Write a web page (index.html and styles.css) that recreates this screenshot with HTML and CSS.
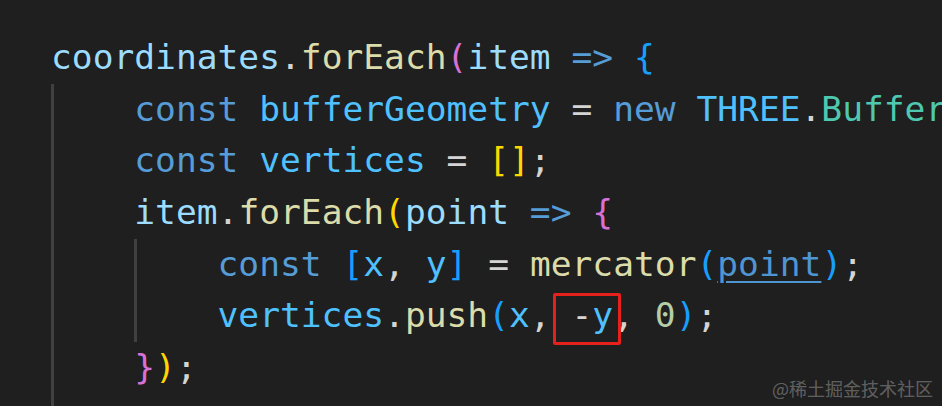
FILE: index.html
```html
<!DOCTYPE html>
<html lang="zh">
<head>
<meta charset="utf-8">
<link rel="stylesheet" href="styles.css">
</head>
<body>
<div class="editor">
<div class="line"><span class="var">coordinates</span><span class="pun">.</span><span class="fn">forEach</span><span class="b2">(</span><span class="var">item</span> <span class="kw">=&gt;</span> <span class="b3">{</span></div>
<div class="block">
<div class="line"><span class="kw">const</span> <span class="cst">bufferGeometry</span> <span class="pun">=</span> <span class="kw">new</span> <span class="cst">THREE</span><span class="pun">.</span><span class="cls">BufferGeometry</span><span class="b1">()</span><span class="pun">;</span></div>
<div class="line"><span class="kw">const</span> <span class="cst">vertices</span> <span class="pun">=</span> <span class="b1">[]</span><span class="pun">;</span></div>
<div class="line"><span class="var">item</span><span class="pun">.</span><span class="fn">forEach</span><span class="b1">(</span><span class="var">point</span> <span class="kw">=&gt;</span> <span class="b2">{</span></div>
<div class="block">
<div class="line"><span class="kw">const</span> <span class="b3">[</span><span class="cst">x</span><span class="pun">,</span> <span class="cst">y</span><span class="b3">]</span> <span class="pun">=</span> <span class="fn">mercator</span><span class="b3">(</span><span class="link">point</span><span class="b3">)</span><span class="pun">;</span></div>
<div class="line"><span class="cst">vertices</span><span class="pun">.</span><span class="fn">push</span><span class="b3">(</span><span class="cst">x</span><span class="pun">,</span><span class="mark"> <span class="pun">-</span><span class="cst">y</span></span><span class="pun">,</span> <span class="num">0</span><span class="b3">)</span><span class="pun">;</span></div>
</div>
<div class="line"><span class="b2">}</span><span class="b1">)</span><span class="pun">;</span></div>
<div class="line"> </div>
</div>
</div>
<div class="watermark">@稀土掘金技术社区</div>
</body>
</html>
```
FILE: styles.css
```css
html, body {
  margin: 0;
  padding: 0;
  background: #1f1f1f;
  width: 942px;
  height: 406px;
  overflow: hidden;
}

body {
  position: relative;
}

.editor {
  padding: 32px 0 0 51px;
  font-family: "DejaVu Sans Mono", "Liberation Mono", monospace;
  font-size: 34.6px;
  line-height: 51.7px;
  color: #d4d4d4;
}

.line {
  white-space: pre;
  height: 51.7px;
}

.block {
  padding-left: 4ch;
  box-shadow: inset 3px 0 0 #404040;
}

.var { color: #9cdcfe; }
.fn { color: #dcdcaa; }
.pun { color: #d4d4d4; }
.kw { color: #569cd6; }
.cst { color: #4fc1ff; }
.cls { color: #4ec9b0; }
.num { color: #b5cea8; }
.b1 { color: #ffd700; }
.b2 { color: #da70d6; }
.b3 { color: #179fff; }

.link {
  color: #4f95d2;
  text-decoration: underline;
  text-decoration-thickness: 2px;
  text-underline-offset: 5px;
}

.mark {
  position: relative;
  display: inline-block;
  height: 51.7px;
  vertical-align: top;
}

.mark::after {
  content: "";
  position: absolute;
  left: 2px;
  right: -8px;
  top: 3px;
  bottom: -3px;
  border: 3px solid #e6211b;
  border-radius: 2px;
}

.watermark {
  position: absolute;
  right: 9px;
  bottom: 8px;
  font-family: "Noto Sans CJK SC", "Noto Sans", sans-serif;
  font-size: 18px;
  line-height: 20px;
  color: rgba(255, 255, 255, 0.3);
}
```
